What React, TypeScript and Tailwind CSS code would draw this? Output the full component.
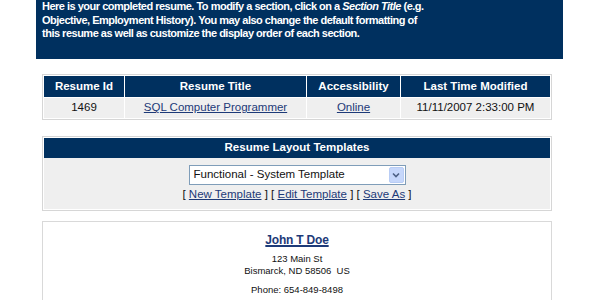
import React from "react";

const font = { fontFamily: '"Liberation Sans", Arial, sans-serif' };

export default function App() {
  return (
    <div className="w-[600px] h-[300px] overflow-hidden bg-white" style={font}>
      <div className="ml-[36px] w-[527px]">
        <div className="h-[59px] bg-[#00305f] px-[6px] text-[11px] font-bold leading-[13.5px] tracking-[-0.5px] text-white">
          Here is your completed resume. To modify a section, click on a <i>Section Title</i> (e.g.
          <br />
          Objective, Employment History). You may also change the default formatting of
          <br />
          this resume as well as customize the display order of each section.
        </div>
        <div className="ml-[6px] w-[510px]">
          <div className="mt-[15px] border border-[#d6d6d6] bg-white p-px">
            <div className="grid grid-cols-[80px_181px_93px_1fr] gap-px text-[11.5px]">
              <div className="flex h-[21px] items-center justify-center bg-[#00305f] font-bold text-white">Resume Id</div>
              <div className="flex h-[21px] items-center justify-center bg-[#00305f] font-bold text-white">Resume Title</div>
              <div className="flex h-[21px] items-center justify-center bg-[#00305f] font-bold text-white">Accessibility</div>
              <div className="flex h-[21px] items-center justify-center bg-[#00305f] font-bold text-white">Last Time Modified</div>
              <div className="flex h-[20px] items-center justify-center bg-[#efefef] text-[#111]">1469</div>
              <div className="flex h-[20px] items-center justify-center bg-[#efefef]"><a className="text-[#1d3a78] underline">SQL Computer Programmer</a></div>
              <div className="flex h-[20px] items-center justify-center bg-[#efefef]"><a className="text-[#1d3a78] underline">Online</a></div>
              <div className="flex h-[20px] items-center justify-center bg-[#efefef] text-[#111]">11/11/2007 2:33:00 PM</div>
            </div>
          </div>

          <div className="mt-[16px] border border-[#d6d6d6] bg-white p-px text-[11.5px]">
            <div className="flex h-[20px] items-center justify-center bg-[#00305f] font-bold text-white">Resume Layout Templates</div>
            <div className="flex flex-col items-center bg-[#efefef] pt-[7px] pb-[6px]">
              <div className="flex h-[20px] w-[217px] items-center border border-[#7f9db9] bg-white pl-[4px] pr-px text-[#111]">
                <span className="flex-1">Functional - System Template</span>
                <span className="flex h-[16px] w-[15px] items-center justify-center rounded-[2px] border border-[#b9cdf5] bg-[#c6d7fb]">
                  <svg width="8" height="6" viewBox="0 0 8 6"><path d="M1 1.5 L4 4.5 L7 1.5" stroke="#4d6185" strokeWidth="1.6" fill="none" /></svg>
                </span>
              </div>
              <div className="mt-[1px] leading-[17px] text-[#111]">
                [ <a className="text-[#1d3a78] underline">New Template</a> ] [ <a className="text-[#1d3a78] underline">Edit Template</a> ] [ <a className="text-[#1d3a78] underline">Save As</a> ]
              </div>
            </div>
          </div>

          <div className="mt-[10px] h-[100px] border border-[#d9d9d9] bg-white pt-[10px] text-center">
            <div className="text-[12px] font-bold leading-[16px] tracking-[-0.2px]"><a className="text-[#1d3a78] underline decoration-[1.5px]">John T Doe</a></div>
            <div className="mt-[5px] text-[9.5px] leading-[12px] text-[#111]">123 Main St</div>
            <div className="text-[9.5px] leading-[11px] text-[#111]">Bismarck, ND 58506&nbsp; US</div>
            <div className="mt-[8px] text-[9.5px] leading-[12px] text-[#111]">Phone: 654-849-8498</div>
          </div>
        </div>
      </div>
    </div>
  );
}
